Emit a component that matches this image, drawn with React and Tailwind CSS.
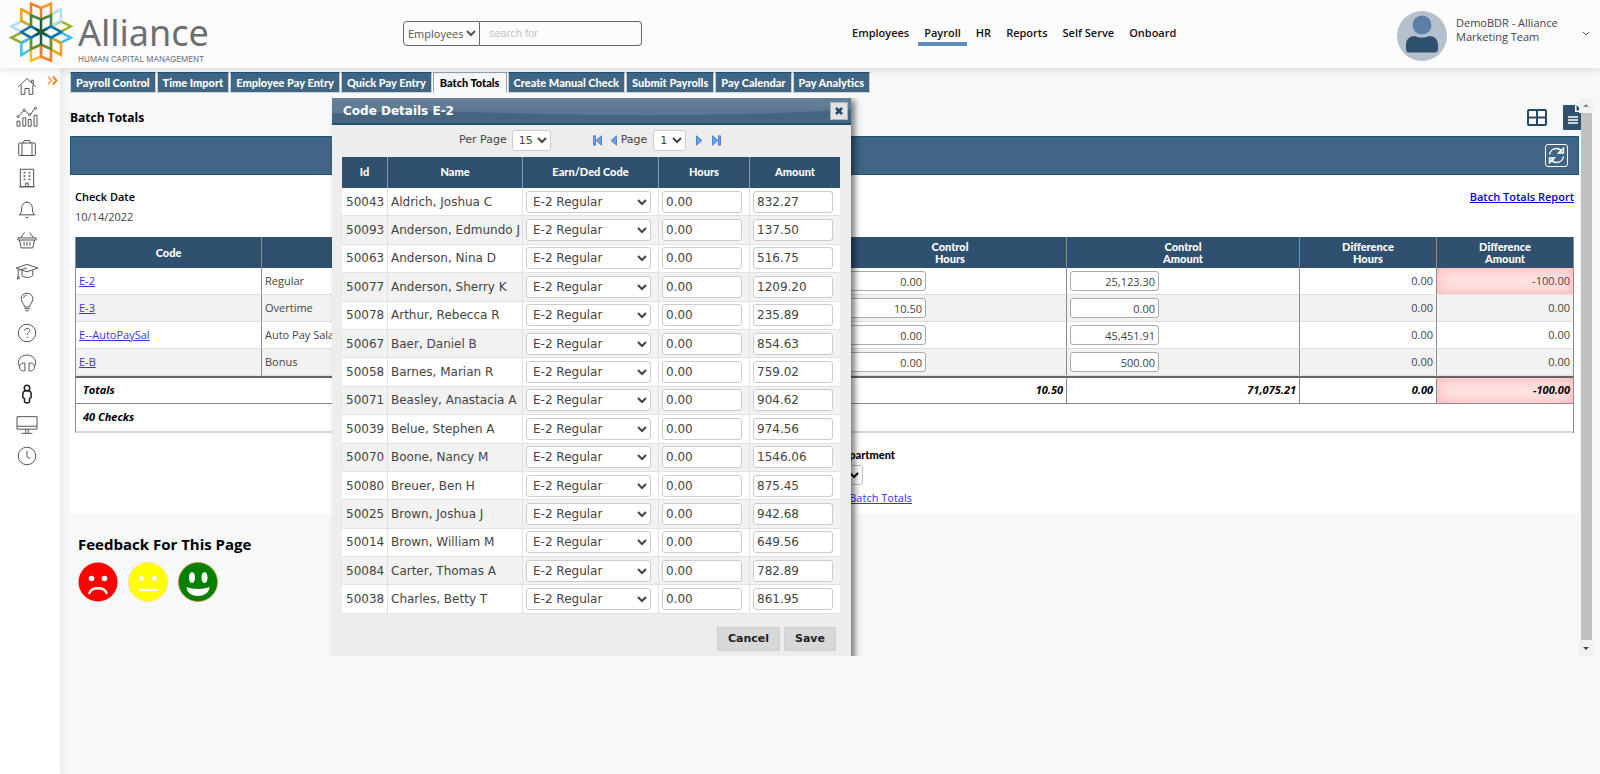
import { useState } from "react";

const MENU = ["Employees", "Payroll", "HR", "Reports", "Self Serve", "Onboard"];

const TABS = [
    "Payroll Control",
    "Time Import",
    "Employee Pay Entry",
    "Quick Pay Entry",
    "Batch Totals",
    "Create Manual Check",
    "Submit Payrolls",
    "Pay Calendar",
    "Pay Analytics",
];

const BATCH_ROWS = [
    { code: "E-2", description: "Regular", hours: "0.00", amount: "25,123.30", diffHours: "0.00", diffAmount: "-100.00" },
    { code: "E-3", description: "Overtime", hours: "10.50", amount: "0.00", diffHours: "0.00", diffAmount: "0.00" },
    { code: "E--AutoPaySal", description: "Auto Pay Salary", hours: "0.00", amount: "45,451.91", diffHours: "0.00", diffAmount: "0.00" },
    { code: "E-B", description: "Bonus", hours: "0.00", amount: "500.00", diffHours: "0.00", diffAmount: "0.00" },
];

const EMPLOYEES = [
    { id: "50043", name: "Aldrich, Joshua C", amount: "832.27" },
    { id: "50093", name: "Anderson, Edmundo J", amount: "137.50" },
    { id: "50063", name: "Anderson, Nina D", amount: "516.75" },
    { id: "50077", name: "Anderson, Sherry K", amount: "1209.20" },
    { id: "50078", name: "Arthur, Rebecca R", amount: "235.89" },
    { id: "50067", name: "Baer, Daniel B", amount: "854.63" },
    { id: "50058", name: "Barnes, Marian R", amount: "759.02" },
    { id: "50071", name: "Beasley, Anastacia A", amount: "904.62" },
    { id: "50039", name: "Belue, Stephen A", amount: "974.56" },
    { id: "50070", name: "Boone, Nancy M", amount: "1546.06" },
    { id: "50080", name: "Breuer, Ben H", amount: "875.45" },
    { id: "50025", name: "Brown, Joshua J", amount: "942.68" },
    { id: "50014", name: "Brown, William M", amount: "649.56" },
    { id: "50084", name: "Carter, Thomas A", amount: "782.89" },
    { id: "50038", name: "Charles, Betty T", amount: "861.95" },
];

const SIDE_ICONS = [
    { label: "Home", d: "M1.500 13 12 3 22.500 13M17.500 8V5h2v5M5 11v11h4.500v-7h5v7H19V11" },
    {
        label: "Analytics",
        d: "M0 17h3.500v6H0zM7 13h3.500v10H7zM13.500 15H17v8h-3.500zM20.500 10H24v13h-3.500zM2.800 10.200 7.600 4.800M9.800 4.800l4.500 3.700M16.500 8.500l4.500-6.300M0 11.500a1.300 1.300 0 1 0 2.600 0 1.300 1.300 0 1 0-2.600 0M7.400 3.800a1.300 1.300 0 1 0 2.600 0 1.300 1.300 0 1 0-2.600 0M14 9.200a1.300 1.300 0 1 0 2.600 0 1.300 1.300 0 1 0-2.600 0M21 1.500a1.300 1.300 0 1 0 2.600 0 1.300 1.300 0 1 0-2.600 0",
    },
    { label: "Company", d: "M3 6h18a1 1 0 0 1 1 1v13a1 1 0 0 1-1 1H3a1 1 0 0 1-1-1V7a1 1 0 0 1 1-1zM6 6v15M18 6v15M8 6V4.500A1.500 1.500 0 0 1 9.500 3h5A1.500 1.500 0 0 1 16 4.500V6" },
    { label: "Building", d: "M4 1.500h16v21H4zM10.500 22.500V18h3v4.500M2.500 22.500h19M8 6h2M14 6h2M8 10h2M14 10h2M8 14h2M14 14h2M8 5.300h2M14 5.300h2M8 9.300h2M14 9.300h2M8 13.300h2M14 13.300h2" },
    { label: "Alerts", d: "M2.500 19C4.700 18 5.500 16 5.500 12 5.500 7 8 4 12 4s6.500 3 6.500 8c0 4 .8 6 3 7zM10 21.500c1 1.300 3 1.300 4 0M12 4V2.500" },
    { label: "Benefits", d: "M1 9.500h22v2.500H1zM3 12l2 9.500h14l2-9.500M4 9.500 9 3M20 9.500 15 3M8.500 14v5M12 14v5M15.500 14v5" },
    { label: "Training", d: "M-1 8.500 12 4l13 4.500L12 13zM6 11v6.500c3 3 9.500 3 13 0V11M12 8.500 1.500 11v8M.5 19h2v2.500h-2z" },
    { label: "Ideas", d: "M9 18c0-4-4-5-4-10 0-4 3-6.500 7-6.500S19 4 19 8c0 5-4 6-4 10zM9 20h6M10 22.500h4M8 7.500C8 5.500 9.500 4 11.500 4" },
    { label: "Help", d: "M12 1.500a10.500 10.500 0 1 0 0 21 10.500 10.500 0 1 0 0-21M9 9.500c0-4 6.500-4 6.500-.5 0 2.500-3.300 2.300-3.300 5.500M12.200 16.500v1.500" },
    { label: "Support", d: "M2.500 15.500C-.5 8 5 2.500 12 2.500s12.500 5.500 9.500 13M9.500 12v9.500H7.500c-6 0-6-9.500 0-9.500zM14.500 12v9.500h2c6 0 6-9.500 0-9.500z" },
    { label: "Employee", heavy: true, d: "M12 1.500a3.300 3.300 0 1 0 0 6.600 3.300 3.300 0 1 0 0-6.600M9.500 8.500c-2 .5-2.500 2-2.500 4v3.500l2 1.500v3.500c0 2 6 2 6 0v-3.500l2-1.500v-3.500c0-2-.5-3.500-2.500-4z" },
    { label: "Desktop", d: "M0 2h24v15H0zM0 13.500h24M10.500 17v4.500M13.500 17v4.500M5.500 22h13" },
    { label: "Time", d: "M12 1.500a10.500 10.500 0 1 0 0 21 10.500 10.500 0 1 0 0-21M12 6v7l3.500 2" },
];

const Logo = () => (
    <div className="flex w-[403px] shrink-0 items-start pl-2">
        <svg className="h-[66px] w-[68px]" viewBox="8 0 204 198" fill="none" strokeWidth="7.500">
            <path stroke="#aee0ec" d="M18 79 48 64 77 79 48 95Z" />
            <path stroke="#9db52c" d="M197 79 167 64 137 79 167 95Z" />
            <path stroke="#8fae2f" d="M18 113 48 98 77 113 48 128Z" />
            <path stroke="#45bfe6" d="M197 113 167 98 137 113 167 128Z" />
            <path stroke="#e8a317" d="M48 28 77 43V78L48 62Z" />
            <path stroke="#aee0ec" d="M167 28 137 43V78L167 62Z" />
            <path stroke="#45bfe6" d="M48 130 77 113V148L48 165Z" />
            <path stroke="#e8a317" d="M167 130 137 113V148L167 165Z" />
            <path stroke="#f47b29" d="M77 11 107 24V58L77 46Z" />
            <path stroke="#f9951e" d="M107 24 137 11V46L107 58" />
            <path stroke="#fbb829" d="M77 147 107 134V170L77 182Z" />
            <path stroke="#f47b29" d="M107 134 137 147V182L107 170Z" />
            <path stroke="#3f8a4a" d="M77 46 107 58 137 46V79L107 96 77 79Z" />
            <path stroke="#6d8c2d" d="M77 147 107 134 137 147V113L107 96 77 113Z" />
            <path stroke="#0f72b5" d="M48 96 77 79 107 96 77 113ZM167 96 137 79 107 96 137 113Z" />
            <path stroke="#1c5c3c" d="M107 58V134M90 86 124 106M124 86 90 106" />
        </svg>
        <div className="flex flex-col pl-[2px] text-[#6e6f73]">
            <span className="pt-3 text-[36px] leading-[42px] font-['Noto_Sans']">Alliance</span>
            <span className="text-[8px] leading-[10px] font-['Inter']">HUMAN CAPITAL MANAGEMENT</span>
        </div>
    </div>
);

const Header = () => (
    <header className="relative z-20 flex h-[68px] items-start bg-[#fcfcfc] shadow-[0_2px_8px_rgba(0,0,0,0.12)]">
        <Logo />
        <form className="mt-[21px] flex h-[25px] w-[239px] shrink-0 text-[#555]">
            <select aria-label="Search in" className="w-[77px] rounded-l-sm border border-[#666] bg-transparent text-[11px]">
                <option>Employees</option>
            </select>
            <input
                aria-label="Search"
                placeholder="search for"
                className="min-w-0 flex-1 rounded-r-sm border border-l-0 border-[#666] bg-transparent px-[9px] font-['Liberation_Sans'] text-[11px] placeholder:text-[#c4c4c4]"
            />
        </form>
        <nav className="mt-[25px] ml-[204px] flex gap-[3px]">
            {MENU.map((item) => (
                <a
                    key={item}
                    href="#"
                    className={`px-[6px] pb-[1px] text-[11px] leading-4 font-semibold text-[#111] ${
                        item === "Payroll" ? "border-b-4 border-[#5b8db8]" : ""
                    }`}
                >
                    {item}
                </a>
            ))}
        </nav>
        <div className="mt-[11px] ml-auto flex pr-[10px]">
            <svg className="h-[50px] w-[50px]" viewBox="0 0 50 50">
                <circle cx="25" cy="25" r="25" fill="#b5c0ce" />
                <circle cx="25" cy="14" r="9.500" fill="#5b80a5" />
                <path d="M9 38v-4c0-6 4-9 9-9 4 2 10 2 14 0 5 0 9 3 9 9v4c0 2-1 3.500-3 3.500H12c-2 0-3-1.500-3-3.500z" fill="#2f506f" />
            </svg>
            <p className="mt-[5px] ml-[9px] w-[126px] text-[11px] leading-[14px] text-[#444]">
                DemoBDR - Alliance Marketing Team
            </p>
            <button aria-label="Account menu" className="mt-[20px] h-[6px]">
                <svg className="h-[6px] w-[8px]" viewBox="0 0 8 6" fill="none" stroke="#555">
                    <path d="M1 1l3 3 3-3" />
                </svg>
            </button>
        </div>
    </header>
);

const Sidebar = () => (
    <aside className="relative z-10 w-[60px] shrink-0 bg-white shadow-[2px_0_8px_rgba(0,0,0,0.08)]">
        <div className="flex h-[398px] w-[54px] flex-col items-center justify-between pt-2">
            {SIDE_ICONS.map((icon) => (
                <a key={icon.label} href="#" aria-label={icon.label}>
                    <svg
                        className="h-5 w-5"
                        viewBox="0 0 24 24"
                        fill="none"
                        stroke={icon.heavy ? "#222" : "#555"}
                        strokeWidth={icon.heavy ? 1.8 : 1.2}
                        overflow="visible"
                    >
                        <path d={icon.d} />
                    </svg>
                </a>
            ))}
        </div>
        <button aria-label="Expand menu" className="absolute top-2 right-[2px]">
            <svg className="h-[9px] w-[11px]" viewBox="0 0 11 9" fill="none" strokeWidth="2">
                <path stroke="#fbb36a" d="M1 .5 4.500 4.500 1 8.500" />
                <path stroke="#f58220" d="M6 .5 9.500 4.500 6 8.500" />
            </svg>
        </button>
    </aside>
);

const TabBar = () => (
    <div className="flex gap-[1px] pt-1 pl-[10px]">
        {TABS.map((tab) => (
            <a
                key={tab}
                href="#"
                className={`h-[21px] border font-['Lato'] text-[11px] leading-5 font-black whitespace-nowrap ${
                    tab === "Batch Totals"
                        ? "border-[#8fa3b3] border-b-transparent bg-[#f7f8fa] px-[6px] text-black"
                        : "border-[#c9ced3] border-t-[#1d557c] bg-[#406585] px-[5px] text-white"
                }`}
            >
                {tab}
            </a>
        ))}
    </div>
);

const headCell = "border-l border-[#8c8c8c] bg-[#30506f] text-center font-['Lato'] text-[11px] leading-[12px] font-black text-white";
const bodyCell = "border-l border-[#8c8c8c] border-b border-b-[#dedede]";
const totalCell = "border-l border-[#8c8c8c] pr-[3px] text-right";
const negative = "bg-[#ffe2e2] shadow-[inset_0_0_14px_#ffb0b0]";
const numberBox = "block h-5 w-[89px] rounded-[3px] border border-[#aaa] bg-white pr-[3px] text-right text-[11px] text-[#444]";

const BatchTable = () => (
    <table className="mt-3 w-full table-fixed border-separate border-spacing-0 border-r border-[#8c8c8c] text-[11px] text-[#444]">
        <colgroup>
            <col className="w-[186px]" />
            <col className="w-[300px]" />
            <col className="w-[136px]" />
            <col className="w-[136px]" />
            <col />
            <col className="w-[233px]" />
            <col className="w-[137px]" />
            <col className="w-[137px]" />
        </colgroup>
        <thead>
            <tr className="h-[31px]">
                <th className={headCell}>Code</th>
                <th className={headCell}>Description</th>
                <th className={headCell}>Actual<br />Hours</th>
                <th className={headCell}>Actual<br />Amount</th>
                <th className={headCell}>Control<br />Hours</th>
                <th className={headCell}>Control<br />Amount</th>
                <th className={headCell}>Difference<br />Hours</th>
                <th className={headCell}>Difference<br />Amount</th>
            </tr>
        </thead>
        <tbody>
            {BATCH_ROWS.map((row) => (
                <tr key={row.code} className="h-[27px] odd:bg-white even:bg-[#f2f2f2]">
                    <td className={`${bodyCell} pl-[3px]`}>
                        <a href="#" className="text-[#3a32e8] underline">{row.code}</a>
                    </td>
                    <td className={`${bodyCell} pl-[3px]`}>{row.description}</td>
                    <td className={bodyCell}></td>
                    <td className={bodyCell}></td>
                    <td className={`${bodyCell} pl-[3px]`}>
                        <input aria-label={`${row.code} control hours`} defaultValue={row.hours} className={numberBox} />
                    </td>
                    <td className={`${bodyCell} pl-[3px]`}>
                        <input aria-label={`${row.code} control amount`} defaultValue={row.amount} className={numberBox} />
                    </td>
                    <td className={`${bodyCell} pr-[3px] text-right`}>{row.diffHours}</td>
                    <td className={`${bodyCell} pr-[3px] text-right ${row.diffAmount.startsWith("-") ? negative : ""}`}>
                        {row.diffAmount}
                    </td>
                </tr>
            ))}
        </tbody>
        <tfoot className="font-bold text-black italic">
            <tr className="h-7">
                <td colSpan={4} className="border-t-2 border-b border-l border-[#8c8c8c] border-t-[#666] pl-[7px]">Totals</td>
                <td className={`${totalCell} border-t-2 border-b border-t-[#666]`}>10.50</td>
                <td className={`${totalCell} border-t-2 border-b border-t-[#666]`}>71,075.21</td>
                <td className={`${totalCell} border-t-2 border-b border-t-[#666]`}>0.00</td>
                <td className={`${totalCell} ${negative} border-t-2 border-b border-t-[#666]`}>-100.00</td>
            </tr>
            <tr className="h-[29px]">
                <td colSpan={8} className="border-b-2 border-l border-b-[#d8d8d8] border-l-[#8c8c8c] bg-white pl-[7px]">40 Checks</td>
            </tr>
        </tfoot>
    </table>
);

const Feedback = () => (
    <section className="mt-[19px] pl-2">
        <h2 className="text-[15px] leading-[22px] font-bold text-black">Feedback For This Page</h2>
        <div className="mt-[7px] flex gap-[10px]">
            <button aria-label="Unhappy">
                <svg className="h-10 w-10" viewBox="0 0 40 40">
                    <circle cx="20" cy="20" r="19.500" fill="red" />
                    <circle cx="13.500" cy="16.500" r="2.800" fill="#fff" />
                    <circle cx="26.500" cy="16.500" r="2.800" fill="#fff" />
                    <path d="M11.500 31c2-6.500 15-6.500 17 0" fill="none" stroke="#fff" strokeWidth="2.500" strokeLinecap="round" />
                </svg>
            </button>
            <button aria-label="Neutral">
                <svg className="h-10 w-10" viewBox="0 0 40 40">
                    <circle cx="20" cy="20" r="19.500" fill="#ff0" stroke="#ffd9a0" strokeWidth=".8" />
                    <circle cx="13.500" cy="16.500" r="2.600" fill="#fff" stroke="#f3d9b0" strokeWidth=".5" />
                    <circle cx="26.500" cy="16.500" r="2.600" fill="#fff" stroke="#f3d9b0" strokeWidth=".5" />
                    <path d="M12 28h16.500" stroke="#fff" strokeWidth="2.500" strokeLinecap="round" />
                </svg>
            </button>
            <button aria-label="Happy">
                <svg className="h-10 w-10" viewBox="0 0 40 40">
                    <circle cx="20" cy="20" r="19.500" fill="green" stroke="#d98b2b" strokeWidth=".8" />
                    <ellipse cx="14" cy="15.500" rx="3" ry="5.500" fill="#fff" />
                    <ellipse cx="26.500" cy="15.500" rx="3" ry="5.500" fill="#fff" />
                    <path d="M8.500 25c6 2.500 17 2.500 23 0-.5 12-22.500 12-23 0z" fill="#fff" />
                </svg>
            </button>
        </div>
    </section>
);

const modalHead = "border-l border-[#8c9aa8] bg-[#30506f] font-['Lato'] text-[11px] font-black text-white first:border-l-0";
const modalCell = "border-l border-b border-[#e2e2e2] first:border-l-0";
const modalBox = "block h-[22px] rounded-[3px] border border-[#ccc] bg-white text-[12px] text-[#444]";

const PagerButton = ({ label, flip, bar }) => (
    <button aria-label={label}>
        <svg className={`h-[11px] ${bar ? "w-[9px]" : "w-[7px]"}`} viewBox={bar ? "0 0 9 11" : "0 0 7 11"}>
            <g fill="#6f9fe8" stroke="#3f74c8" strokeWidth=".8" transform={flip ? `translate(${bar ? 9 : 7} 0) scale(-1 1)` : ""}>
                <path d="M.5 .8 6 5.500 .5 10.200z" />
                {bar && <path d="M6.500 .8h2v9.400h-2z" />}
            </g>
        </svg>
    </button>
);

const CodeDetails = ({ onClose }) => {
    const [perPage, setPerPage] = useState("15");

    return (
        <div
            role="dialog"
            aria-label="Code Details E-2"
            className="absolute top-0 left-[272px] h-[580px] w-[519px] bg-[#ededed] font-['DejaVu_Sans',sans-serif] text-[12px] text-[#444] shadow-[4px_2px_6px_rgba(0,0,0,0.5)]"
        >
            {/* Title bar */}
            <div className="relative flex h-[27px] items-center justify-between overflow-hidden border-b-2 border-[#1d4f73] bg-linear-to-b from-[#668097] to-[#55738c] pt-[1px] pr-[3px] pl-[11px]">
                <svg className="absolute inset-0 h-full w-full" viewBox="0 0 519 26" preserveAspectRatio="none">
                    <path d="M0 16C90 12 140 15 230 17S430 18 519 12V26H0z" fill="#446481" />
                </svg>
                <h2 className="relative text-[12px] font-bold text-white">Code Details E-2</h2>
                <button
                    aria-label="Close"
                    onClick={onClose}
                    className="relative flex h-[18px] w-[18px] items-center justify-center border border-[#aab4bd] bg-[#e2e2e2]"
                >
                    <svg className="h-2 w-2" viewBox="0 0 8 8" stroke="#234a6b" strokeWidth="2.600">
                        <path d="M1 1l6 6M7 1 1 7" />
                    </svg>
                </button>
            </div>

            {/* Paging */}
            <div className="flex h-8 items-center pb-[2px] pl-[127px] text-[11px]">
                <label htmlFor="perPage">Per Page</label>
                <select
                    id="perPage"
                    value={perPage}
                    onChange={(e) => setPerPage(e.target.value)}
                    className="ml-[5px] h-[21px] w-[39px] rounded-[3px] border border-[#ccc] bg-white pl-[2px]"
                >
                    <option>15</option>
                    <option>30</option>
                </select>
                <div className="ml-[42px] flex items-center gap-2">
                    <PagerButton label="First page" flip bar />
                    <PagerButton label="Previous page" flip />
                </div>
                <label htmlFor="page" className="ml-[4px]">Page</label>
                <select id="page" className="ml-[6px] h-[21px] w-[33px] rounded-[3px] border border-[#ccc] bg-white pl-[2px]">
                    <option>1</option>
                    <option>2</option>
                </select>
                <div className="ml-[10px] flex items-center gap-[9px]">
                    <PagerButton label="Next page" />
                    <PagerButton label="Last page" bar />
                </div>
            </div>

            <table className="mx-[10px] h-[457px] w-[498px] table-fixed border-separate border-spacing-0">
                <colgroup>
                    <col className="w-[45px]" />
                    <col className="w-[135px]" />
                    <col className="w-[136px]" />
                    <col className="w-[91px]" />
                    <col />
                </colgroup>
                <thead>
                    <tr className="h-[31px]">
                        <th className={modalHead}>Id</th>
                        <th className={modalHead}>Name</th>
                        <th className={modalHead}>Earn/Ded Code</th>
                        <th className={modalHead}>Hours</th>
                        <th className={modalHead}>Amount</th>
                    </tr>
                </thead>
                <tbody>
                    {EMPLOYEES.map((emp) => (
                        <tr key={emp.id} className="odd:bg-white even:bg-[#f2f2f2]">
                            <td className={`${modalCell} pl-[4px]`}>{emp.id}</td>
                            <td className={`${modalCell} pl-[3px] whitespace-nowrap`}>{emp.name}</td>
                            <td className={`${modalCell} pl-[3px]`}>
                                <select aria-label={`Code for ${emp.name}`} className={`${modalBox} w-[125px] pl-[2px]`}>
                                    <option>E-2 Regular</option>
                                    <option>E-3 Overtime</option>
                                </select>
                            </td>
                            <td className={`${modalCell} pl-[3px]`}>
                                <input aria-label={`Hours for ${emp.name}`} defaultValue="0.00" className={`${modalBox} w-20 pl-[3px]`} />
                            </td>
                            <td className={`${modalCell} pl-[3px]`}>
                                <input aria-label={`Amount for ${emp.name}`} defaultValue={emp.amount} className={`${modalBox} w-20 pl-[3px]`} />
                            </td>
                        </tr>
                    ))}
                </tbody>
            </table>

            <div className="mt-[13px] flex justify-end gap-1 pr-[15px] text-[11px] font-bold text-[#222]">
                <button onClick={onClose} className="h-6 w-[63px] border border-[#cfcfcf] bg-[#d8d8d8]">Cancel</button>
                <button onClick={onClose} className="h-6 w-[52px] border border-[#cfcfcf] bg-[#d8d8d8]">Save</button>
            </div>
        </div>
    );
};

const BatchTotals = () => {
    const [detailsOpen, setDetailsOpen] = useState(true);

    return (
        <div className="relative mt-[5px] h-[558px] overflow-hidden pr-[21px] pl-[10px]">
            <div className="flex h-[38px] items-center justify-between pt-[1px]">
                <h1 className="text-[12px] font-bold text-black">Batch Totals</h1>
                <div className="-mr-[3px] flex items-center gap-4">
                    <button aria-label="Grid view">
                        <svg className="h-[17px] w-5" viewBox="0 0 20 17" fill="#fff" stroke="#234a6b" strokeWidth="2">
                            <rect x="1" y="1" width="18" height="15" rx="1" />
                            <path d="M10 1v15M1 8.500h18" />
                        </svg>
                    </button>
                    <button aria-label="Report">
                        <svg className="h-[25px] w-[19px]" viewBox="0 0 19 25" fill="#2f506f">
                            <path d="M1 0h11v7h7v17a1 1 0 0 1-1 1H1a1 1 0 0 1-1-1V1a1 1 0 0 1 1-1zM13.500 0 19 5.500h-5.500z" />
                            <path stroke="#fff" strokeWidth="1.600" d="M5 12h10M5 15h10M5 18h10" />
                        </svg>
                    </button>
                </div>
            </div>

            <div className="flex h-[39px] items-center justify-end border border-[#1d557c] bg-[#406585] pr-[10px]">
                <button aria-label="Refresh" className="flex h-[23px] w-[23px] items-center justify-center rounded-[3px] border border-white">
                    <svg className="h-[17px] w-[17px]" viewBox="0 0 17 17" fill="none" stroke="#fff" strokeWidth="1.400">
                        <path d="M1.500 7.500C2 4 5 1.500 8.500 1.500c2.500 0 4 1 5.500 3M10.500 6h5V1.200zM15.500 9.500C15 13 12 15.500 8.500 15.500c-2.500 0-4-1-5.500-3M6.500 11h-5v4.800z" />
                    </svg>
                </button>
            </div>

            <section className="h-[339px] bg-white pt-[14px] pr-[5px] pl-[5px]">
                <div className="flex justify-between">
                    <div>
                        <h3 className="text-[11px] leading-4 font-semibold text-black">Check Date</h3>
                        <p className="mt-1 text-[11px] leading-4 text-[#444]">10/14/2022</p>
                    </div>
                    <a href="#" className="text-[11px] leading-4 font-semibold text-[#0000e0] underline">Batch Totals Report</a>
                </div>

                <BatchTable />

                <div className="mt-[14px] flex flex-col items-end pr-[662px] text-[11px]">
                    <div className="pr-[17px]">
                        <label htmlFor="department" className="block font-['Lato'] leading-4 font-black text-black">Department</label>
                    </div>
                    <select id="department" className="mt-[2px] mr-[49px] h-5 w-[120px] rounded-[3px] border border-[#bbb] bg-white">
                        <option>All</option>
                    </select>
                    <a href="#" className="mt-[5px] leading-4 text-[#3a32e8] underline">Print Batch Totals</a>
                </div>
            </section>

            <Feedback />

            {/* Scrollbar of the page frame */}
            <div className="absolute inset-y-0 right-[7px] flex w-[14px] flex-col items-center justify-between">
                <span className="flex h-[15px] w-full items-center justify-center bg-[#f1f1f1]">
                    <svg className="h-[3px] w-[6px]" viewBox="0 0 6 3" fill="#888"><path d="M0 3 3 0 6 3z" /></svg>
                </span>
                <span className="w-[11px] flex-1 bg-[#c1c1c1]" />
                <span className="flex h-[16px] w-full items-center justify-center bg-[#f1f1f1]">
                    <svg className="h-[3px] w-[6px]" viewBox="0 0 6 3" fill="#444"><path d="M0 0h6L3 3z" /></svg>
                </span>
            </div>

            {detailsOpen && <CodeDetails onClose={() => setDetailsOpen(false)} />}
        </div>
    );
};

const App = () => (
    <div className="flex min-h-screen flex-col bg-[#f7f8fa] font-['Open_Sans','Noto_Sans',sans-serif]">
        <Header />
        <div className="flex flex-1">
            <Sidebar />
            <main className="min-w-0 flex-1">
                <TabBar />
                <BatchTotals />
            </main>
        </div>
    </div>
);

export default App;
